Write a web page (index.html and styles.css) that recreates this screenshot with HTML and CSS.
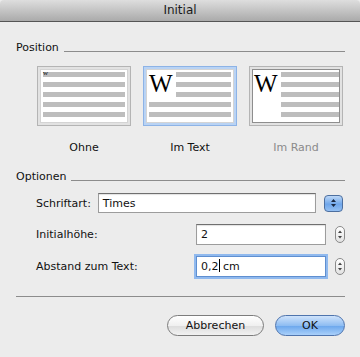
FILE: index.html
```html
<!DOCTYPE html>
<html lang="de">
  <head>
    <meta charset="UTF-8" />
    <title>Initial</title>
    <link rel="stylesheet" href="styles.css">
  </head>
  <body>
    <div class="titlebar">Initial</div>

    <div class="content">
      <div class="group-head position-head">
        <span>Position</span>
        <div class="rule"></div>
      </div>

      <div class="positions">
        <div class="choice">
          <div class="well">
            <div class="page plain">
              <i class="first"><b>w</b></i><i></i><i></i><i></i><i></i>
            </div>
          </div>
          <div class="caption">Ohne</div>
        </div>
        <div class="choice">
          <div class="well selected">
            <div class="page intext">
              <span class="drop">W</span>
              <i></i><i></i><i></i>
              <i class="full"></i><i class="full"></i>
            </div>
          </div>
          <div class="caption">Im Text</div>
        </div>
        <div class="choice">
          <div class="well">
            <div class="page margin">
              <span class="drop">W</span>
              <i></i><i></i><i></i><i></i><i></i>
            </div>
          </div>
          <div class="caption disabled">Im Rand</div>
        </div>
      </div>

      <div class="group-head options-head">
        <span>Optionen</span>
        <div class="rule"></div>
      </div>

      <div class="row font-row">
        <label>Schriftart:</label>
        <div class="field wide">Times</div>
        <div class="popup">
          <svg width="7" height="10" viewBox="0 0 7 10"><path d="M3.5 1 L6 4 H1 Z M3.5 9 L6 6 H1 Z" fill="#1b2a44"/></svg>
        </div>
      </div>

      <div class="row">
        <label class="grow">Initialhöhe:</label>
        <div class="field">2</div>
        <div class="stepper">
          <svg width="6" height="11" viewBox="0 0 6 11"><path d="M3 1.5 L5 4 H1 Z M3 9.5 L5 7 H1 Z" fill="#444"/></svg>
        </div>
      </div>

      <div class="row">
        <label class="grow">Abstand zum Text:</label>
        <div class="field focused">0,2<span class="caret"></span> cm</div>
        <div class="stepper">
          <svg width="6" height="11" viewBox="0 0 6 11"><path d="M3 1.5 L5 4 H1 Z M3 9.5 L5 7 H1 Z" fill="#444"/></svg>
        </div>
      </div>

      <div class="divider"></div>

      <div class="buttons">
        <button class="btn cancel">Abbrechen</button>
        <button class="btn ok">OK</button>
      </div>
    </div>
  </body>
</html>
```

FILE: styles.css
```css
* {
  margin: 0;
  padding: 0;
  box-sizing: border-box;
}

body {
  width: 360px;
  height: 357px;
  overflow: hidden;
  background: #ececec;
  font-family: "DejaVu Sans", sans-serif;
  font-size: 11px;
  color: #111;
}

.titlebar {
  height: 22px;
  line-height: 21px;
  text-align: center;
  font-size: 12px;
  color: #1a1a1a;
  background: linear-gradient(#dedede, #aaaaaa);
  border-bottom: 1px solid #555;
  border-radius: 4px 4px 0 0;
}

.content {
  padding: 0 15px 0 16px;
}

.group-head {
  display: flex;
  align-items: center;
  height: 14px;
  line-height: 14px;
}

.group-head .rule {
  flex: 1;
  height: 1px;
  margin: 6px 0 0 5px;
  background: #8c8c8c;
}

.position-head {
  margin-top: 19px;
}

.positions {
  display: flex;
  gap: 12px;
  margin: 11px 0 0 21px;
}

.choice {
  width: 94px;
}

.well {
  height: 60px;
  padding: 2px;
  border: 1px solid #b4b4b4;
  background: #e2e2e2;
}

.well.selected {
  border-color: #8db3e6;
  background: #b9d3f4;
}

.page {
  height: 100%;
  background: #fff;
  border: 1px solid #d4d4d4;
  padding: 2px 2px 0 2px;
  display: grid;
  grid-auto-rows: 5px;
  row-gap: 5px;
}

.page i {
  display: block;
  background: #bdbdbd;
}

.plain .first {
  position: relative;
}

.plain .first b {
  position: absolute;
  left: 0;
  top: -2px;
  font: 7px/7px "Liberation Serif", serif;
  color: #000;
}

.drop {
  font: 25px/18px "Liberation Serif", serif;
  color: #000;
  grid-row: span 3;
  padding-top: 3px;
}

.intext {
  grid-template-columns: 27px 1fr;
}

.intext .full {
  grid-column: 1 / -1;
}

.margin {
  border-color: #8e8e8e;
  padding: 2px 0 0 0;
  grid-template-columns: 28px 1fr;
}

.margin .drop {
  grid-row: 1 / span 5;
  padding-left: 1px;
}

.margin i {
  grid-column: 2;
}

.caption {
  text-align: center;
  margin-top: 15px;
  line-height: 14px;
}

.caption.disabled {
  color: #8a8a8a;
}

.options-head {
  margin-top: 15px;
}

.row {
  display: flex;
  align-items: center;
  padding-left: 20px;
  margin-top: 11px;
  height: 21px;
}

.font-row {
  margin-top: 9px;
  height: 20px;
  padding-right: 2px;
}

.row label {
  margin-right: 7px;
}

.row label.grow {
  flex: 1;
}

.field {
  height: 100%;
  width: 130px;
  background: #fff;
  border: 1px solid #9c9c9c;
  border-top-color: #6f6f6f;
  box-shadow: inset 0 1px 1px rgba(0, 0, 0, 0.12);
  padding-left: 4px;
  line-height: 19px;
  font-size: 11px;
}

.field.wide {
  flex: 1;
  width: auto;
}

.field.focused {
  border: 1px solid #5f8fd0;
  box-shadow: 0 0 0 2px #90b9ee;
}

.caret {
  display: inline-block;
  width: 1px;
  height: 13px;
  background: #000;
  vertical-align: -2px;
}

.popup {
  width: 19px;
  height: 17px;
  margin-left: 8px;
  border: 1px solid #4d6f9f;
  border-radius: 4px;
  background: linear-gradient(#bcd7f7, #6fa6ea 55%, #94c0f3);
  display: flex;
  align-items: center;
  justify-content: center;
}

.stepper {
  width: 10px;
  height: 17px;
  margin-left: 9px;
  border: 1px solid #8a8a8a;
  border-radius: 5px;
  background: linear-gradient(#ffffff, #e2e2e2);
  display: flex;
  align-items: center;
  justify-content: center;
}

.divider {
  height: 1px;
  margin-top: 19px;
  background: #8c8c8c;
}

.buttons {
  display: flex;
  justify-content: flex-end;
  gap: 11px;
  margin-top: 18px;
}

.btn {
  height: 21px;
  border-radius: 11px;
  font-family: "DejaVu Sans", sans-serif;
  font-size: 11px;
  color: #111;
  cursor: pointer;
}

.cancel {
  width: 97px;
  border: 1px solid #7c7c7c;
  background: linear-gradient(#ffffff, #f0f0f0 50%, #dcdcdc 51%, #f2f2f2);
}

.ok {
  width: 70px;
  border: 1px solid #4f74ad;
  background: linear-gradient(#cfe3fb, #8fbdf2 50%, #6aa6ec 51%, #a9d0fa);
}
```
